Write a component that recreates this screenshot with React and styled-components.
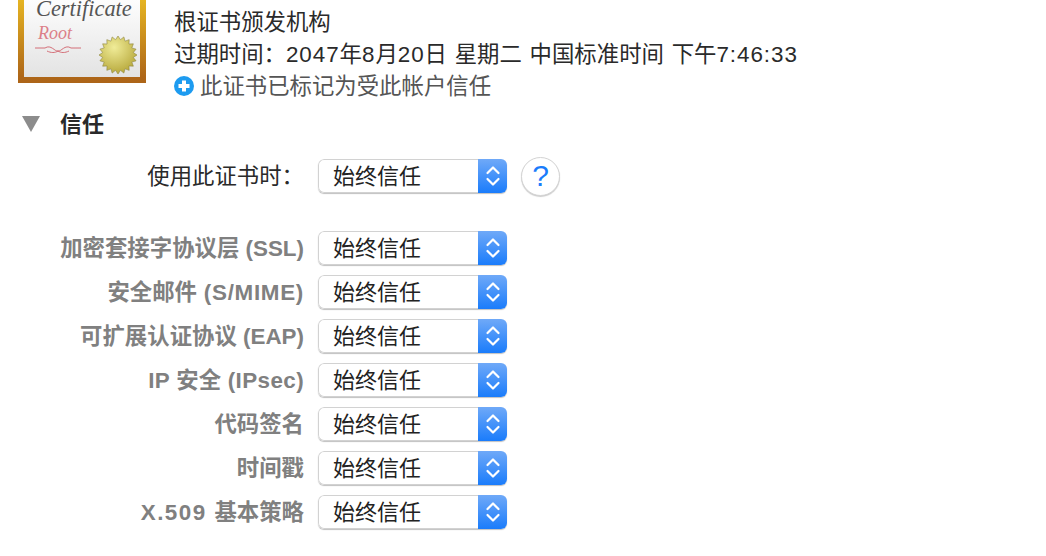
import styled, { createGlobalStyle } from "styled-components";

const rows = [
  { text: "加密套接字协议层 (SSL)", track: 0 },
  { text: "安全邮件 (S/MIME)", track: 0.7 },
  { text: "可扩展认证协议 (EAP)", track: 0 },
  { text: "IP 安全 (IPsec)", track: 0.4 },
  { text: "代码签名", track: 0 },
  { text: "时间戳", track: 0 },
  { text: "X.509 基本策略", track: 1.5 },
];

const Global = createGlobalStyle`
  html, body {
    margin: 0;
    padding: 0;
    background: #fff;
    overflow: hidden;
  }
  body {
    font-family: "Liberation Sans", "Noto Sans CJK SC", sans-serif;
    color: #2a2a2a;
  }
`;

const Page = styled.div`
  width: 1046px;
  height: 556px;
  overflow: hidden;
`;

const Header = styled.div`
  display: flex;
  align-items: flex-start;
  height: 100px;
  padding-left: 18px;
`;

const CertFrame = styled.div`
  width: 128px;
  height: 83px;
  box-sizing: border-box;
  border: solid 6px;
  border-top: 0;
  border-image: linear-gradient(#e6b522, #ad6518) 1;
  background: linear-gradient(#fdfdfd, #e3e3e3);
  position: relative;
  overflow: hidden;
  flex-shrink: 0;
`;

const CertTitle = styled.span`
  position: absolute;
  left: 12px;
  top: 0;
  font: italic 22.4px/18px "Liberation Serif", serif;
  color: #555;
`;

const CertRoot = styled.span`
  position: absolute;
  left: 14px;
  top: 24px;
  font: italic 18px/18px "Liberation Serif", serif;
  color: #dc7f88;
`;

const Seal = styled.svg`
  position: absolute;
  right: 2px;
  bottom: 2px;
`;

const Flourish = styled.svg`
  position: absolute;
  left: 11px;
  top: 44px;
`;

const Info = styled.div`
  margin-left: 28px;
  padding-top: 7px;
  display: flex;
  flex-direction: column;
`;

const InfoLine = styled.div`
  height: 32px;
  line-height: 32px;
  font-size: 22.4px;
  white-space: pre;
  word-spacing: 1.5px;
  color: ${(p) => (p.$muted ? "#555" : "#2a2a2a")};
`;

const Num = styled.span`
  letter-spacing: 0.95px;
`;

const PlusIcon = styled.svg`
  margin-right: 6px;
  vertical-align: -2px;
`;

const Section = styled.div`
  display: flex;
  align-items: center;
  height: 32px;
  padding-left: 22px;
  margin-top: 8px;
`;

const Triangle = styled.div`
  width: 0;
  height: 0;
  border-left: 9px solid transparent;
  border-right: 9px solid transparent;
  border-top: 16px solid #8c8c8c;
`;

const SectionTitle = styled.div`
  margin-left: 20px;
  padding-bottom: 4px;
  font-size: 22px;
  font-weight: 700;
`;

const Row = styled.div`
  display: flex;
  align-items: center;
  height: 44px;
  margin-top: ${(p) => p.$mt || 0}px;
`;

const Label = styled.div`
  width: 304px;
  padding-bottom: 4px;
  text-align: right;
  font-size: 22.4px;
  font-weight: ${(p) => (p.$active ? 400 : 700)};
  white-space: pre;
  color: ${(p) => (p.$active ? "#2a2a2a" : "#808080")};
`;

const Latin = styled.span`
  letter-spacing: ${(p) => p.$track}px;
`;

const Select = styled.div`
  margin-left: 14px;
  width: 189px;
  height: 34px;
  display: flex;
  border-radius: 6px;
  background: #fff;
  box-shadow: 0 1px 1px rgba(0, 0, 0, 0.25);
  overflow: hidden;
`;

const SelectText = styled.div`
  flex: 1;
  box-sizing: border-box;
  padding-left: 14px;
  border: 1px solid #d2d2d2;
  border-right: 0;
  border-radius: 6px 0 0 6px;
  line-height: 33px;
  font-size: 22px;
  color: #222;
`;

const Stepper = styled.div`
  width: 29px;
  display: flex;
  align-items: center;
  justify-content: center;
  background: linear-gradient(#6fa9f8, #1a7cfb);
`;

const HelpButton = styled.div`
  margin-left: 14px;
  width: 39px;
  height: 39px;
  box-sizing: border-box;
  border-radius: 50%;
  background: #fff;
  border: 1px solid #d4d4d4;
  box-shadow: 0 1px 1px rgba(0, 0, 0, 0.2);
  display: flex;
  align-items: center;
  justify-content: center;
  font-size: 30px;
  color: #1a7cfb;
`;

function Chevrons() {
  return (
    <svg width="16" height="24" viewBox="0 0 16 24" fill="none" stroke="#fff" strokeWidth="2.2" strokeLinecap="round" strokeLinejoin="round">
      <path d="M2.5 9 L8 3.5 L13.5 9" />
      <path d="M2.5 15 L8 20.5 L13.5 15" />
    </svg>
  );
}

function SealIcon() {
  const pts = [];
  for (let i = 0; i < 40; i++) {
    const r = i % 2 ? 15.5 : 19;
    const a = (i / 40) * Math.PI * 2;
    pts.push(`${20 + r * Math.cos(a)},${20 + r * Math.sin(a)}`);
  }
  return (
    <Seal width="40" height="40" viewBox="0 0 40 40">
      <defs>
        <radialGradient id="seal" cx="0.4" cy="0.3" r="0.8">
          <stop offset="0" stopColor="#f0ec98" />
          <stop offset="1" stopColor="#b0a030" />
        </radialGradient>
      </defs>
      <polygon points={pts.join(" ")} fill="url(#seal)" stroke="#8f8640" strokeWidth="0.6" />
    </Seal>
  );
}

function TrustSelect() {
  return (
    <Select>
      <SelectText>始终信任</SelectText>
      <Stepper><Chevrons /></Stepper>
    </Select>
  );
}

// latin runs get their own tracking, the cjk runs stay as they are
function RowLabel({ text, track }) {
  const parts = text.split(/([A-Za-z0-9./() ]+)/).filter(Boolean);
  return (
    <Label>
      {parts.map((p, i) =>
        /^[A-Za-z0-9./() ]+$/.test(p) ? <Latin key={i} $track={track}>{p}</Latin> : p
      )}
    </Label>
  );
}

export default function App() {
  return (
    <Page>
      <Global />
      <Header>
        <CertFrame>
          <CertTitle>Certificate</CertTitle>
          <CertRoot>Root</CertRoot>
          <Flourish width="46" height="10" viewBox="0 0 46 10" fill="none" stroke="#d0616b" strokeWidth="0.9">
            <path d="M0 4 H10 C16 0 20 8 23 7 C26 8 30 0 36 4 H46" />
            <path d="M12 7 C16 9 20 9 23 7 C26 9 30 9 34 7" />
          </Flourish>
          <SealIcon />
        </CertFrame>
        <Info>
          <InfoLine>根证书颁发机构</InfoLine>
          <InfoLine>
            过期时间：<Num>2047</Num>年<Num>8</Num>月<Num>20</Num>日 星期二 中国标准时间 下午<Num>7:46:33</Num>
          </InfoLine>
          <InfoLine $muted>
            <PlusIcon width="20" height="20" viewBox="0 0 20 20">
              <circle cx="10" cy="10" r="10" fill="#1d9bf0" />
              <path d="M10 4.5 V15.5 M4.5 10 H15.5" stroke="#fff" strokeWidth="4" />
            </PlusIcon>
            此证书已标记为受此帐户信任
          </InfoLine>
        </Info>
      </Header>
      <Section>
        <Triangle />
        <SectionTitle>信任</SectionTitle>
      </Section>
      <Row $mt={14}>
        <Label $active>使用此证书时：</Label>
        <TrustSelect />
        <HelpButton>?</HelpButton>
      </Row>
      {rows.map((r, i) => (
        <Row key={r.text} $mt={i === 0 ? 28 : 0}>
          <RowLabel text={r.text} track={r.track} />
          <TrustSelect />
        </Row>
      ))}
    </Page>
  );
}
